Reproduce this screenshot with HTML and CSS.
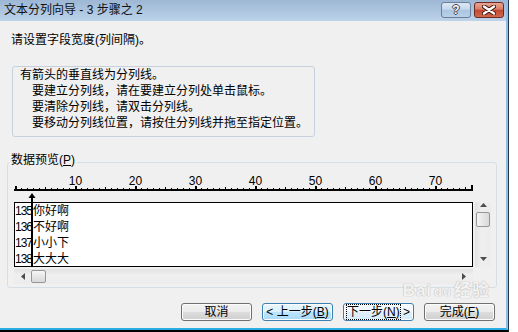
FILE: index.html
```html
<!DOCTYPE html>
<html lang="zh-CN">
<head>
  <meta charset="UTF-8" />
  <meta name="viewport" content="width=device-width, initial-scale=1.0"/>
  <title>文本分列向导 - 3 步骤之 2</title>
  <link rel="stylesheet" href="styles.css">
</head>
<body>
  <div class="frame">
    <div class="window">
      <div class="titlebar">
        <span class="title">文本分列向导 - 3 步骤之 2</span>
        <div class="caption-btns">
          <button class="cap help">?</button>
          <button class="cap close">
            <svg width="14" height="10" viewBox="0 0 14 10">
              <path d="M2 1.5 L12 8.5 M12 1.5 L2 8.5" stroke="#4a1a14" stroke-width="4.5" stroke-linecap="round"/>
              <path d="M2 1.5 L12 8.5 M12 1.5 L2 8.5" stroke="#fff" stroke-width="2.4" stroke-linecap="round"/>
            </svg>
          </button>
        </div>
      </div>

      <div class="body">
        <p class="prompt">请设置字段宽度(列间隔)。</p>

        <div class="info">
          <p>有箭头的垂直线为分列线。</p>
          <p class="indent">要建立分列线，请在要建立分列处单击鼠标。</p>
          <p class="indent">要清除分列线，请双击分列线。</p>
          <p class="indent">要移动分列线位置，请按住分列线并拖至指定位置。</p>
        </div>

        <div class="group">
          <div class="group-label">数据预览(<u>P</u>)</div>

          <svg class="ruler" width="460" height="30" viewBox="0 0 460 30">
            <defs>
              <pattern id="ticks" x="1" y="0" width="60" height="30" patternUnits="userSpaceOnUse">
                <rect x="0" y="14" width="2" height="4" fill="#000"/>
                <rect x="6" y="16" width="1" height="1" fill="#000"/>
                <rect x="12" y="16" width="1" height="1" fill="#000"/>
                <rect x="18" y="16" width="1" height="1" fill="#000"/>
                <rect x="24" y="16" width="1" height="1" fill="#000"/>
                <rect x="30" y="15" width="1" height="2" fill="#000"/>
                <rect x="36" y="16" width="1" height="1" fill="#000"/>
                <rect x="42" y="16" width="1" height="1" fill="#000"/>
                <rect x="48" y="16" width="1" height="1" fill="#000"/>
                <rect x="54" y="16" width="1" height="1" fill="#000"/>
              </pattern>
            </defs>
            <rect x="0" y="0" width="457" height="18" fill="url(#ticks)"/>
            <rect x="0" y="17" width="459" height="2" fill="#000"/>
            <rect x="457" y="13" width="2" height="6" fill="#000"/>
            <text x="61.5" y="13">10</text>
            <text x="121.5" y="13">20</text>
            <text x="181.5" y="13">30</text>
            <text x="241.5" y="13">40</text>
            <text x="301.5" y="13">50</text>
            <text x="361.5" y="13">60</text>
            <text x="421.5" y="13">70</text>
          </svg>

          <div class="preview">
            <div class="data-box">
              <div class="row"><span class="num">135</span>你好啊</div>
              <div class="row"><span class="num">136</span>不好啊</div>
              <div class="row"><span class="num">137</span>小小下</div>
              <div class="row"><span class="num">138</span>大大大</div>
            </div>

            <div class="vscroll">
              <svg width="7" height="4" viewBox="0 0 7 4"><path d="M3.5 0 L7 4 L0 4 Z" fill="#4d4d4d"/></svg>
              <div class="thumb v"></div>
              <div class="spacer"></div>
              <svg width="7" height="4" viewBox="0 0 7 4"><path d="M0 0 L7 0 L3.5 4 Z" fill="#4d4d4d"/></svg>
            </div>

            <div class="hscroll">
              <svg width="4" height="7" viewBox="0 0 4 7"><path d="M4 0 L4 7 L0 3.5 Z" fill="#4d4d4d"/></svg>
              <div class="thumb h"></div>
              <div class="spacer"></div>
              <svg width="4" height="7" viewBox="0 0 4 7"><path d="M0 0 L4 3.5 L0 7 Z" fill="#4d4d4d"/></svg>
            </div>

            <svg class="split-arrow" width="8" height="74" viewBox="0 0 8 74">
              <path d="M4 0 L7.5 5 L0.5 5 Z" fill="#000"/>
              <rect x="3" y="4" width="2" height="70" fill="#000"/>
            </svg>
          </div>
        </div>

        <div class="buttons">
          <button class="btn">取消</button>
          <button class="btn hover">&lt; 上一步(<u>B</u>)</button>
          <button class="btn default"><span class="focus">下一步(<u>N</u>)</span> &gt;</button>
          <button class="btn">完成(<u>F</u>)</button>
        </div>
      </div>

      <div class="watermark">Bai<span class="paw">du</span>经验</div>
    </div>
  </div>
</body>
</html>
```

FILE: styles.css
```css
body {
  margin: 0;
  background-color: #fff;
  font-family: "Liberation Sans", "Noto Sans CJK SC", sans-serif;
  font-size: 12px;
  color: #000;
}

.frame {
  width: 509px;
  height: 332px;
  box-sizing: border-box;
  border-right: 1px solid #25364a;
  border-bottom: 2px solid #000;
}

.window {
  position: relative;
  height: 330px;
  box-sizing: border-box;
  background-color: #f0f0f0;
  border-right: 2px solid #8fbde4;
  border-bottom: 2px solid #2aaee6;
  display: flex;
  flex-direction: column;
  overflow: hidden;
}

/* title bar */
.titlebar {
  flex: none;
  height: 21px;
  box-sizing: border-box;
  padding: 2px 2px 0 4px;
  background: linear-gradient(#9db7d4, #bcd3ea);
  display: flex;
  justify-content: space-between;
  align-items: flex-start;
}

.title {
  line-height: 16px;
  color: #111;
}

.caption-btns {
  display: flex;
  gap: 3px;
}

.cap {
  width: 30px;
  height: 16px;
  padding: 0;
  border: 1px solid;
  border-radius: 3px;
  display: flex;
  align-items: center;
  justify-content: center;
}

.help {
  border-color: #6a7f9a;
  background: linear-gradient(#dce8f4, #c5d8ec 45%, #abc5e0 50%, #b9d0e8);
  color: #f6f6f6;
  font: bold 12px "Liberation Sans", sans-serif;
  text-shadow: 1px 0 #3c4756, -1px 0 #3c4756, 0 1px #3c4756, 0 -1px #3c4756;
}

.close {
  border-color: #6e2b22;
  background: linear-gradient(#e9a694, #d77c66 45%, #c2482f 50%, #d0684e);
}

/* content */
.body {
  flex: 1;
}

.prompt {
  margin: 11px 0 0 11px;
  line-height: 16px;
}

.info {
  width: 303px;
  height: 71px;
  box-sizing: border-box;
  margin: 18px 0 0 12px;
  padding-left: 7px;
  border: 1px solid #c6d1dd;
  border-radius: 3px;
}

.info p {
  margin: 0;
  line-height: 16px;
}

.info .indent {
  padding-left: 12px;
}

.group {
  width: 490px;
  box-sizing: border-box;
  margin: 25px 0 0 7px;
  padding: 0 5px 3px 6px;
  border: 1px solid #d5dfe5;
  border-radius: 3px;
}

.group-label {
  width: fit-content;
  margin: -11px 0 0 -5px;
  padding: 0 2px;
  line-height: 16px;
  background-color: #f0f0f0;
}

.ruler {
  display: block;
  margin-top: 4px;
  overflow: visible;
}

.ruler text {
  font: 12px "Liberation Sans", sans-serif;
  text-anchor: middle;
  fill: #000;
}

.preview {
  position: relative;
  display: grid;
  grid-template-columns: 459px 16px;
  grid-template-rows: 65px 15px;
  gap: 2px;
}

.data-box {
  background-color: #fff;
  border: 1px solid #000;
  overflow: hidden;
}

.row {
  line-height: 16px;
  white-space: nowrap;
}

.num {
  letter-spacing: -1px;
  margin-right: 1px;
}

.vscroll {
  display: flex;
  flex-direction: column;
  align-items: center;
  padding: 1px 0 6px;
  background: linear-gradient(90deg, #e2e2e2, #efefef 40%, #ececec);
}

.hscroll {
  display: flex;
  align-items: center;
  padding: 0 7px 0 7px;
  background: linear-gradient(#e2e2e2, #efefef 40%, #ececec);
}

.spacer {
  flex: 1;
}

.thumb {
  box-sizing: border-box;
  border: 1px solid #979797;
  border-radius: 2px;
}

.thumb.v {
  width: 14px;
  height: 15px;
  margin-top: 5px;
  background: linear-gradient(90deg, #f6f6f6, #e6e6e6 50%, #d9d9d9);
}

.thumb.h {
  width: 15px;
  height: 13px;
  margin-left: 6px;
  background: linear-gradient(#f6f6f6, #e6e6e6 50%, #d9d9d9);
}

.split-arrow {
  position: absolute;
  left: 14px;
  top: -9px;
}

/* buttons */
.buttons {
  display: flex;
  justify-content: flex-end;
  gap: 10px;
  margin: 15px 11px 0 0;
}

.btn {
  width: 71px;
  height: 18px;
  padding: 0;
  border: 1px solid #707070;
  border-radius: 3px;
  background: linear-gradient(#f2f2f2, #ebebeb 50%, #dddddd 50%, #cfcfcf);
  box-shadow: inset 0 0 0 1px #fcfcfc;
  font: 12px "Liberation Sans", "Noto Sans CJK SC", sans-serif;
  line-height: 14px;
  color: #000;
}

.btn.hover {
  border-color: #3c7fb1;
  background: linear-gradient(#eaf6fd, #d9f0fc 50%, #bee6fd 50%, #a7d9f5);
}

.btn.default {
  border-color: #3c7fb1;
  background: linear-gradient(#f6fbfe, #eef7fd 50%, #e0f1fc 50%, #d4ebfa);
}

.btn .focus {
  outline: 1px dotted #000;
  outline-offset: 0;
}

/* page watermark */
.watermark {
  position: absolute;
  right: 16px;
  top: 282px;
  line-height: 18px;
  font: bold 17px/18px "Liberation Sans", "Noto Sans CJK SC", sans-serif;
  color: rgba(255, 255, 255, 0.85);
  text-shadow: 0 0 1px #b4b4b4, 0 0 1px #b4b4b4;
  letter-spacing: 1px;
}

.watermark .paw {
  font-size: 13px;
  margin: 0 2px;
}
```
